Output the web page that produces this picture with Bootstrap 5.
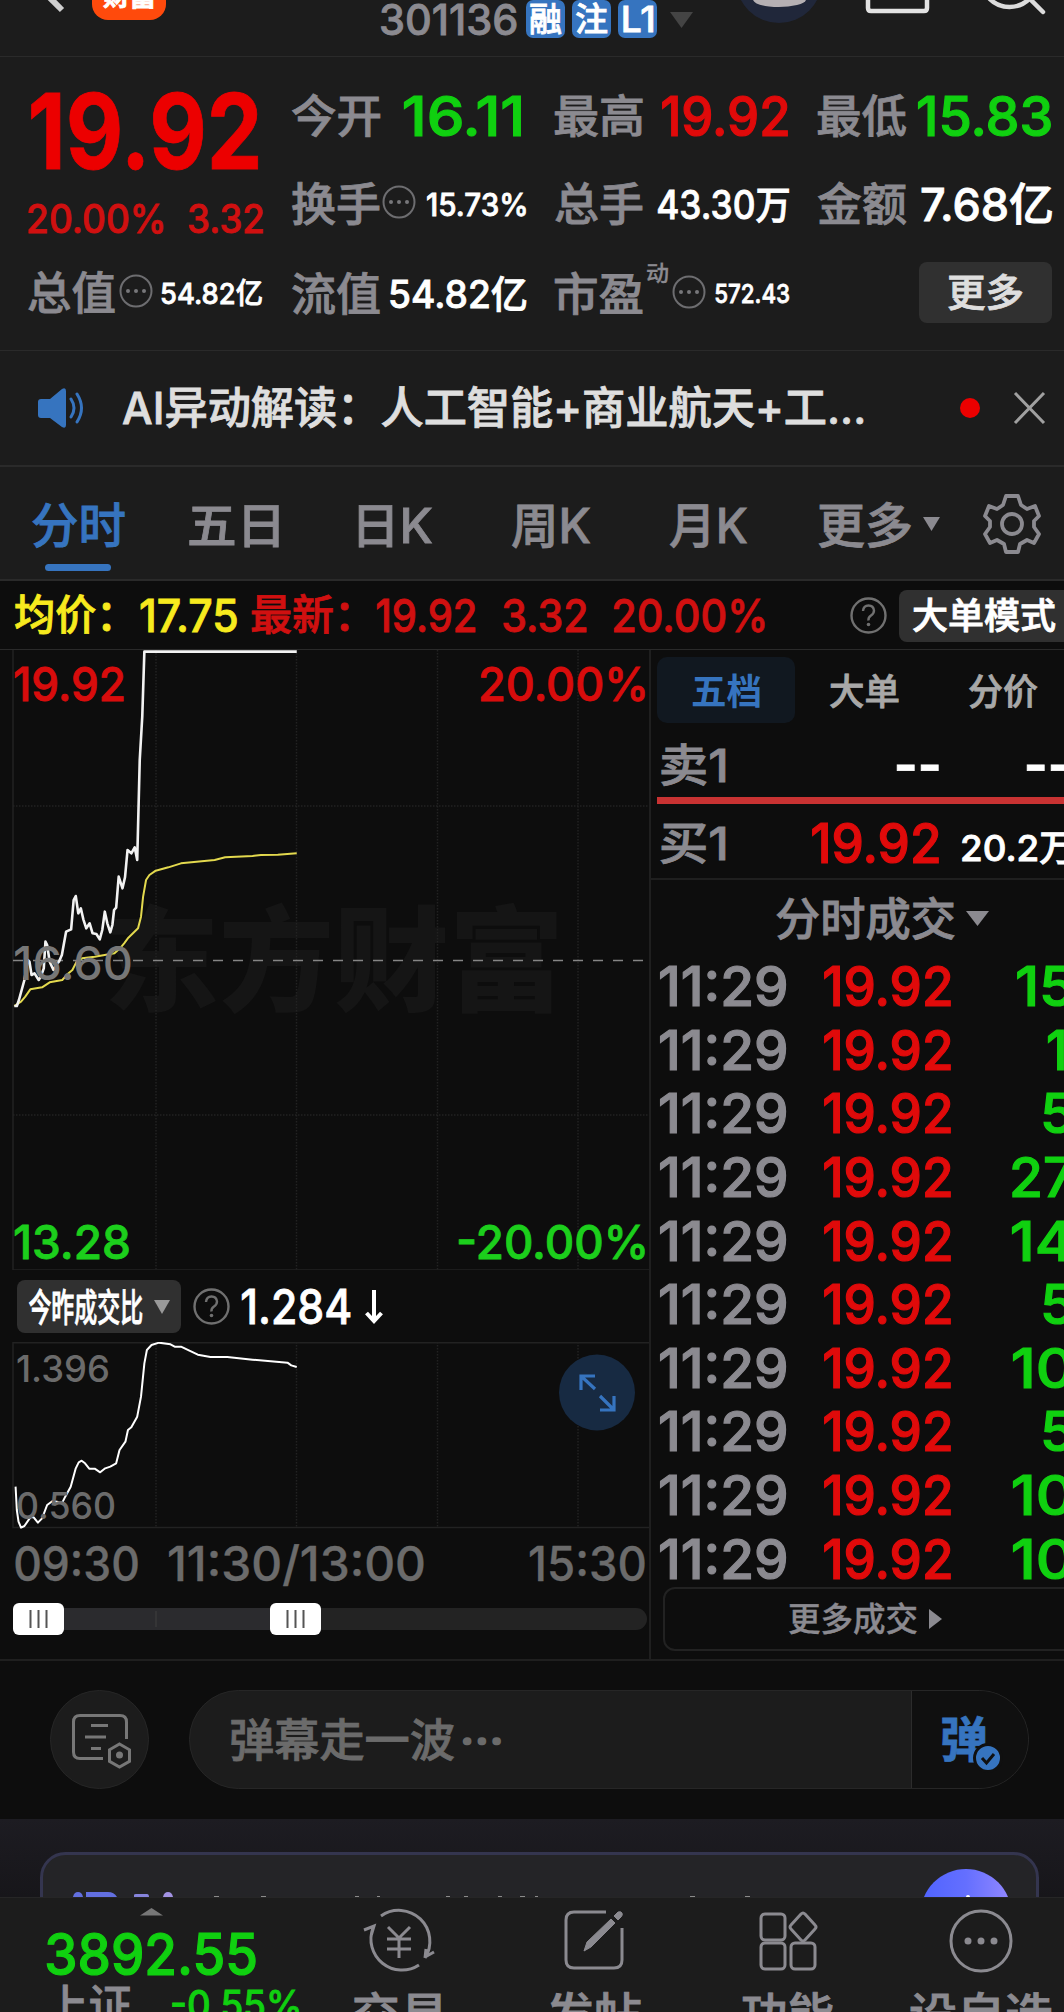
<!DOCTYPE html>
<html lang="zh-CN">
<head>
<meta charset="utf-8">
<meta name="viewport" content="width=device-width, initial-scale=1">
<title>301136 分时</title>
<link href="https://cdn.jsdelivr.net/npm/bootstrap@5.3.0/dist/css/bootstrap.min.css" rel="stylesheet">
<style>
:root{--panel:#1c1c1c;--ink:#0d0d0d;--line:#2a2a2a;--mute:#8b8a90;--dim:#6b6b6b;--up:#e00a0a;--down:#10d010;--blue:#3674bf}
html,body{margin:0;background:var(--ink)}
body{font-family:Inter,"Noto Sans CJK SC",sans-serif;font-weight:500;line-height:1;color:#fff}
svg{display:block;flex:none}
svg text{font-family:Inter,"Noto Sans CJK SC",sans-serif;font-weight:500}
.app{width:1064px;height:2012px;overflow:hidden}
.fit{display:block;flex:none;white-space:nowrap;line-height:1;-webkit-text-stroke:.8px currentColor}
.fit>span{display:inline-block;transform-origin:0 50%}
.s22{font-size:22px;-webkit-text-stroke-width:.3px}.s26{font-size:26px}.s29{font-size:29px}.s30{font-size:31px}.s32{font-size:33px}.s35{font-size:35px}.s36{font-size:36px}.s38{font-size:38px}.s39{font-size:39px}.s41{font-size:42px}.s43{font-size:44px}.s45{font-size:45px}.s47{font-size:48px}.s55{font-size:55px;-webkit-text-stroke-width:1.2px}.s57{font-size:57px;-webkit-text-stroke-width:1.2px}.s104{font-size:104px;font-weight:700}
.dim .fit{-webkit-text-stroke-width:.4px}
.mute{color:var(--mute)}.dim{color:var(--dim)}.up{color:var(--up)}.up2{color:#d01010}.down{color:var(--down)}.blue{color:var(--blue)}.pale{color:#dedede}.yel{color:#f7ea1e}
.panel{background:var(--panel);border-bottom:2px solid var(--line)}
.pillbtn{background:#303030;border-radius:8px}
/* title bar */
.titlebar{height:57px;border-bottom-width:1px}
.titlebar>.back{width:92px;height:56px}
.brand{width:74px;height:44px;margin-top:-24px;border-radius:0 0 16px 16px;background:#ff4a0c;padding-top:8px}
.code{margin-left:215px;height:40px}
.chips{margin-left:9px;gap:7px}
.chip{height:38px;width:39px;border-radius:7px;background:var(--blue)}
/* quote */
.quote{height:294px;padding:15px 0 0 28px;border-bottom-width:1px}
.qleft{width:235px;margin-right:29px}
.qcell{width:234px;height:88px;margin-right:29px}
.qcell.last{margin-right:0}
.qcell.low>.fit{margin-top:4px}
.qleft .big{height:117px;padding-left:3px}
.qleft .pct{height:58px}
.qcell.low>.dyn{margin:-38px 4px 0 4px}
.more{width:135px;height:61px;margin-left:101px}
/* notice */
.notice{height:116px;padding-left:36px}
.notice .fit{margin-left:37px}
.dot{width:20px;height:20px;border-radius:50%;background:#ec0000;margin-left:97px}
.xmark{margin-left:33px}
/* tabs */
.tabs{height:114px;padding-left:32px}
.tabitem{height:114px;border:0}
.tabitem .fit{margin-top:4px}
.tabitem.on::after{content:"";position:absolute;left:13px;top:97px;width:66px;height:7px;border-radius:4px;background:var(--blue)}
.info{height:69px;background:var(--ink);padding-left:15px;border-bottom:1px solid var(--line)}
.mode{width:180px;height:52px;margin-left:12px;padding-left:14px;margin-top:2px}
/* main */
.board{height:1011px;border-bottom:2px solid #1f1f1f}
.chartcol{width:651px;border-right:2px solid #1f1f1f}
.compare{height:72px;padding-left:17px;padding-top:1px}
.comparebtn{width:164px;height:53px;padding:0 11px 0 12px}
.axis{height:70px;padding:0 4px 0 15px}
.handles{height:34px;margin-left:13px;width:634px}
.book{width:413px;overflow:hidden}
.seg{height:66px;margin:7px 0 0 6px}
.seg .fit{margin-top:4px}
.seg .cur{width:138px;height:66px;border-radius:10px;background:#111820}
.ask{height:74px;padding:10px 0 0 10px}
.bar{height:7px;margin-left:6px;background:#c83232}
.bid{height:76px;padding:5px 0 0 10px;border-bottom:2px solid #1f1f1f}
.tickhead{height:75px;padding:3px 0 0 125px}
.ticks{height:636px}
.tick{height:63.6px;padding-left:9px}
.vol{width:121px}
.moretick{width:420px;height:64px;margin:-4px 0 0 12px;border:2px solid #222;border-radius:12px;padding-left:124px}
/* comment bar */
.danmu{height:158px;padding:29px 0 0 50px}
.roundbtn{width:99px;height:99px;border-radius:50%;background:var(--panel);border:1px solid #262626}
.field{width:840px;height:99px;margin-left:40px;border-radius:50px;background:var(--panel);border:1px solid #262626;overflow:hidden}
.field .ph{width:722px;padding:2px 0 0 41px;border-right:1px solid #2c2c2c}
.field .send{background:#101010}
.promo{height:78px;background:linear-gradient(#1d1c22,#17161a)}
.dock{height:115px;background:var(--panel);border-top:1px solid #262626}
.dockcol{height:115px}
</style>
</head>
<body>
<div class="app d-flex flex-column">

<header class="panel titlebar d-flex align-items-start flex-shrink-0">
  <svg class="back" viewBox="0 0 92 56"><path d="M38-14 62 10" stroke="#cfcfcf" stroke-width="6" fill="none"/></svg>
  <div class="brand d-flex justify-content-center"><span class="fit s26 fw-bold" data-w="52">财富</span></div>
  <div class="code d-flex align-items-center"><span class="fit s41 mute" data-w="136">301136</span></div>
  <div class="chips d-flex pt-0">
    <div class="chip d-flex align-items-center justify-content-center"><span class="fit s32" data-w="31">融</span></div>
    <div class="chip d-flex align-items-center justify-content-center"><span class="fit s32" data-w="31">注</span></div>
    <div class="chip d-flex align-items-center justify-content-center"><span class="fit s35" data-w="30">L1</span></div>
  </div>
  <svg width="406" height="56" viewBox="658 0 406 56">
    <path d="M671 12h23l-11.500 16z" fill="#444"/>
    <circle cx="780" cy="-20" r="43" fill="#20273a"/>
    <path d="M754 0q2 5 16 6.500 15 1.500 28-1.500 8-2 9-5z" fill="#b5b0b3"/>
    <path d="M869-4v12q0 3 3 3h53q3 0 3-3V-4" fill="none" stroke="#e2e2e2" stroke-width="4.500"/>
    <circle cx="1010.500" cy="-21" r="28" fill="none" stroke="#dcdcdc" stroke-width="4.500"/>
    <path d="M1030-2l14 14" stroke="#dcdcdc" stroke-width="4.500" stroke-linecap="round"/>
  </svg>
</header>

<section class="panel quote d-flex flex-shrink-0">
  <div class="qleft">
    <div class="big d-flex align-items-center"><span class="fit s104" style="color:#ec0000" data-w="227">19.92</span></div>
    <div class="pct d-flex align-items-center justify-content-between up2"><span class="fit s39" data-w="135">20.00%</span><span class="fit s39" data-w="74">3.32</span></div>
    <div class="qcell low d-flex align-items-center"><span class="fit s45 mute" data-w="87">总值</span><svg style="margin-left:4px" width="34" height="34" viewBox="-17 -17 34 34"><use href="#dots"/></svg><span class="fit s29 ms-auto" data-w="100">54.82亿</span></div>
  </div>
  <div>
    <div class="d-flex">
      <div class="qcell d-flex align-items-center justify-content-between"><span class="fit s45 mute" data-w="88">今开</span><span class="fit s55 down" style="margin-right:5px" data-w="117">16.11</span></div>
      <div class="qcell d-flex align-items-center justify-content-between"><span class="fit s45 mute" data-w="88">最高</span><span class="fit s55 up" style="margin-right:1px" data-w="126">19.92</span></div>
      <div class="qcell last d-flex align-items-center justify-content-between"><span class="fit s45 mute" data-w="88">最低</span><span class="fit s55 down" style="margin-right:1px" data-w="133">15.83</span></div>
    </div>
    <div class="d-flex">
      <div class="qcell d-flex align-items-center"><span class="fit s45 mute" data-w="88">换手</span><svg style="margin:-4px 0 0 2px" width="34" height="34" viewBox="-17 -17 34 34"><use href="#dots"/></svg><span class="fit s30 ms-auto" data-w="99">15.73%</span></div>
      <div class="qcell d-flex align-items-center justify-content-between"><span class="fit s45 mute" data-w="88">总手</span><span class="fit s39" data-w="131">43.30万</span></div>
      <div class="qcell last d-flex align-items-center justify-content-between"><span class="fit s45 mute" data-w="88">金额</span><span class="fit s45" data-w="131">7.68亿</span></div>
    </div>
    <div class="d-flex">
      <div class="qcell low d-flex align-items-center justify-content-between"><span class="fit s45 mute" data-w="88">流值</span><span class="fit s38" data-w="136">54.82亿</span></div>
      <div class="qcell low d-flex align-items-center"><span class="fit s45 mute" data-w="88">市盈</span><span class="fit s22 mute dyn" data-w="21">动</span><svg width="34" height="34" viewBox="-17 -17 34 34"><use href="#dots"/></svg><span class="fit s26 ms-auto" data-w="74">572.43</span></div>
      <div class="qcell last d-flex align-items-center"><div class="pillbtn more d-flex align-items-center justify-content-center"><span class="fit s38 pale" data-w="75">更多</span></div></div>
    </div>
  </div>
</section>

<section class="panel notice d-flex align-items-center flex-shrink-0">
  <svg width="50" height="42" viewBox="0 0 50 42"><path d="M5 12h9L26 2q4-2 4 2v34q0 4-4 2L14 31H5q-3 0-3-3V15q0-3 3-3z" fill="#3674bf"/><path d="M35 12q6 9 0 18M41 7q9 14 0 28" fill="none" stroke="#3674bf" stroke-width="3" stroke-linecap="round"/></svg>
  <span class="fit s43 pale" data-w="740">AI异动解读：人工智能+商业航天+工...</span>
  <i class="dot"></i>
  <svg class="xmark" width="33" height="34" viewBox="0 0 33 34"><path d="M2 2l29 30M31 2L2 32" stroke="#a0a0a0" stroke-width="3"/></svg>
</section>

<nav class="panel tabs d-flex flex-shrink-0 mute">
  <div class="tabitem on position-relative d-flex align-items-center blue"><span class="fit s47" data-w="93">分时</span></div>
  <div class="tabitem d-flex align-items-center" style="margin-left:64px"><span class="fit s47" data-w="90">五日</span></div>
  <div class="tabitem d-flex align-items-center" style="margin-left:80px"><span class="fit s47" data-w="73">日K</span></div>
  <div class="tabitem d-flex align-items-center" style="margin-left:80px"><span class="fit s47" data-w="78">周K</span></div>
  <div class="tabitem d-flex align-items-center" style="margin-left:80px"><span class="fit s47" data-w="77">月K</span></div>
  <div class="tabitem d-flex align-items-center" style="margin-left:72px"><span class="fit s47" data-w="92">更多</span><svg class="ms-2" width="24" height="16" viewBox="-4 0 24 16"><path d="M0 1h17L8.500 15z" fill="#8b8a90"/></svg></div>
  <div class="tabitem d-flex align-items-center" style="margin-left:39px"><svg width="60" height="62" viewBox="-30 -31 60 62" fill="none" stroke="#8b8a90" stroke-width="3.800" stroke-linejoin="round"><path d="M-6-28H6L9-19 15-15 23-18 27-8 22-3V3L27 10 22 19 15 16 8 20 6 28H-6L-8 20-15 16-22 19-27 10-22 3V-3L-27-8-23-18-15-15-9-19z"/><circle r="10"/></svg></div>
</nav>

<section class="info d-flex align-items-center flex-shrink-0">
  <span class="fit s41 yel" data-w="96">均价：</span>
  <span class="fit s45 yel" style="margin-left:30px" data-w="96">17.75</span>
  <span class="fit s41 up2" style="margin-left:14px" data-w="98">最新：</span>
  <span class="fit s45 up2" style="margin-left:28px" data-w="98">19.92</span>
  <span class="fit s45 up2" style="margin-left:28px" data-w="83">3.32</span>
  <span class="fit s45 up2" style="margin-left:28px" data-w="150">20.00%</span>
  <svg style="margin-left:86px" width="37" height="37" viewBox="-18.500 -18.500 37 37"><use href="#help"/></svg>
  <div class="pillbtn mode d-flex align-items-center flex-shrink-0"><span class="fit s36" data-w="142">大单模式</span></div>
</section>

<main class="board d-flex flex-shrink-0">
  <div class="chartcol flex-shrink-0">
    <svg width="649" height="620" viewBox="0 0 649 620">
      <text x="104" y="352" font-size="114" style="font-weight:900" textLength="460" lengthAdjust="spacingAndGlyphs" fill="#151515">东方财富</text>
      <g stroke="#222" stroke-width="1.500" fill="none">
        <path d="M13 0V620H649"/>
        <path d="M156 0V620M296.500 0V620M437.500 0V620M578 0V620M13 156H649M13 465H649" stroke-dasharray="1.500 1.500"/>
      </g>
      <path d="M13 310.500H645" stroke="#858585" stroke-width="1.600" stroke-dasharray="10 10"/>
      <g transform="translate(0,-10) scale(.4209,.33333)" fill="none" stroke-linejoin="round">
        <polyline vector-effect="non-scaling-stroke" stroke="#e3d94e" stroke-width="2" points="34,1098 50,1085 60,1070 72,1048 100,1042 118,1027 148,1020 160,1003 172,990 182,965 195,955 225,950 272,940 285,925 295,910 305,893 328,865 335,830 340,770 347,720 355,705 370,692 400,682 430,670 510,660 535,652 600,648 620,645 660,644 705,640"/>
        <polyline vector-effect="non-scaling-stroke" stroke="#f2f2f2" stroke-width="2.600" points="34,1098 40,1098 45,1080 58,1020 66,960 70,965 75,1005 82,1000 92,1020 97,1010 104,985 108,905 112,915 118,965 127,990 133,975 140,965 147,945 157,875 169,868 175,780 180,768 186,820 192,805 198,838 205,865 213,850 220,880 229,882 237,898 243,870 249,815 255,850 262,877 267,855 271,810 276,803 282,710 291,745 297,712 303,630 312,640 320,622 326,660 332,360 338,230 343,35 705,35"/>
      </g>
      <g font-size="47" stroke-width=".8">
        <text x="13" y="51" textLength="113" lengthAdjust="spacingAndGlyphs" fill="#d80c0c" stroke="#d80c0c">19.92</text>
        <text x="478" y="51" textLength="171" lengthAdjust="spacingAndGlyphs" fill="#d80c0c" stroke="#d80c0c">20.00%</text>
        <text x="13" y="330" textLength="120" lengthAdjust="spacingAndGlyphs" fill="#777">16.60</text>
        <text x="13" y="609" textLength="118" lengthAdjust="spacingAndGlyphs" fill="#1ccf1c" stroke="#1ccf1c">13.28</text>
        <text x="456" y="609" textLength="193" lengthAdjust="spacingAndGlyphs" fill="#1ccf1c" stroke="#1ccf1c">-20.00%</text>
      </g>
    </svg>
    <div class="compare d-flex align-items-center">
      <div class="pillbtn comparebtn d-flex align-items-center justify-content-between"><span class="fit s38" data-w="113">今昨成交比</span><svg width="16" height="14"><path d="M0 0h16L8 14z" fill="#999"/></svg></div>
      <svg style="margin-left:12px" width="37" height="37" viewBox="-18.500 -18.500 37 37"><use href="#help"/></svg>
      <span class="fit s47" style="margin-left:12px" data-w="108">1.284</span>
      <svg style="margin-left:15px" width="18" height="34" viewBox="0 0 18 34"><path d="M9 0v31M1.500 23L9 31l7.500-8" fill="none" stroke="#fff" stroke-width="4"/></svg>
    </div>
    <svg width="649" height="187" viewBox="0 1342 649 187">
      <g stroke="#222" stroke-width="1.500" fill="none">
        <path d="M649 1342.800H13V1527.500H649"/>
        <path d="M156 1342V1527M296.500 1342V1527M437.500 1342V1527M578 1342V1527" stroke-dasharray="1.500 1.500"/>
      </g>
      <polyline transform="translate(0,1230) scale(.4209,.33333)" vector-effect="non-scaling-stroke" fill="none" stroke="#fff" stroke-width="2" stroke-linejoin="round" points="37,770 40,840 44,875 50,893 58,888 72,862 80,862 90,878 100,865 112,825 125,813 148,818 155,800 168,770 180,715 187,697 194,692 202,700 212,716 225,716 238,727 250,715 262,710 276,700 284,660 298,635 304,600 312,592 326,560 335,500 343,400 349,360 360,345 378,338 405,343 415,350 430,350 450,362 470,374 500,381 540,381 600,389 683,398 692,406 705,411"/>
      <g font-size="37" fill="#6b6b6b">
        <text x="16" y="1382" textLength="94" lengthAdjust="spacingAndGlyphs">1.396</text>
        <text x="16" y="1518.500" textLength="100" lengthAdjust="spacingAndGlyphs">0.560</text>
      </g>
      <circle cx="597" cy="1392.500" r="38" fill="#172a42"/>
      <path d="M595 1376H581V1390M581 1376L595 1389M600 1410H614V1396M614 1410L600 1396" fill="none" stroke="#3674bf" stroke-width="3.200"/>
    </svg>
    <div class="axis d-flex align-items-center dim">
      <span class="fit s47" data-w="123">09:30</span>
      <span class="fit s47" style="margin-left:31px" data-w="255">11:30/13:00</span>
      <span class="fit s47 ms-auto" data-w="115">15:30</span>
    </div>
    <svg class="handles" style="margin-top:3px" viewBox="0 0 634 34">
      <rect x="10" y="6" width="624" height="22" rx="11" fill="#232323"/><rect x="10" y="6" width="270" height="22" fill="#2b2b2e"/><path d="M143 9v16" stroke="#3a3a3a" stroke-width="1.500"/>
      <rect x="0" y="1" width="51" height="32" rx="6" fill="#fff"/><rect x="257" y="1" width="51" height="32" rx="6" fill="#fff"/>
      <path d="M17.500 8v18M25.500 8v18M33.500 8v18M274.500 8v18M282.500 8v18M290.500 8v18" stroke="#555" stroke-width="2"/>
    </svg>
  </div>

  <div class="book">
    <div class="seg d-flex align-items-center">
      <div class="cur d-flex align-items-center justify-content-center blue"><span class="fit s36 fw-bold" style="-webkit-text-stroke-width:0" data-w="69">五档</span></div>
      <span class="fit s36" style="margin-left:35px;color:#a8a8a8" data-w="69">大单</span>
      <span class="fit s36" style="margin-left:70px;color:#a8a8a8" data-w="69">分价</span>
    </div>
    <div class="ask d-flex align-items-center"><span class="fit s45 mute" data-w="65">卖1</span><span class="fit s47 fw-bold" style="margin-left:171px" data-w="42">--</span><span class="fit s47 fw-bold" style="margin-left:88px" data-w="42">--</span></div>
    <div class="bar"></div>
    <div class="bid d-flex align-items-center"><span class="fit s45 mute" data-w="65">买1</span><span class="fit s55 up" style="margin-left:86px" data-w="127">19.92</span><span class="fit s36 mt-2" style="margin-left:23px" data-w="112">20.2万</span></div>
    <div class="tickhead d-flex align-items-center mute"><span class="fit s45" data-w="179">分时成交</span><svg style="margin:-2px 0 0 11px" width="23" height="15"><path d="M0 0h23L11.500 15z" fill="#8b8a90"/></svg></div>
    <div class="ticks" id="ticks"></div>
    <div class="moretick d-flex align-items-center mute"><span class="fit s32" style="-webkit-text-stroke-width:.4px" data-w="128">更多成交</span><svg style="margin-left:12px" width="13" height="20"><path d="M0 0l13 10L0 20z" fill="#8b8a90"/></svg></div>
  </div>
</main>

<section class="danmu d-flex flex-shrink-0">
  <div class="roundbtn d-flex align-items-center justify-content-center flex-shrink-0">
    <svg width="64" height="60" viewBox="68 1711 64 60" fill="none" stroke="#777" stroke-width="3"><path d="M126.500 1740v-17q0-6.500-6.500-6.500H80q-6.500 0-6.500 6.500v30q0 6.500 6.500 6.500h23M91 1726.500h17M85 1738h21M91 1749.500h10"/><path d="M119.500 1745l10 5.800v11.500l-10 5.700-10-5.700v-11.500z"/><circle cx="119.500" cy="1756" r="3.500" fill="#777" stroke="none"/></svg>
  </div>
  <div class="field d-flex">
    <div class="ph d-flex align-items-center dim flex-shrink-0"><span class="fit s45" style="-webkit-text-stroke-width:.8px" data-w="223">弹幕走一波</span><span class="fit s45" style="margin-left:9px;-webkit-text-stroke-width:1.5px" data-w="38">···</span></div>
    <div class="send flex-grow-1 position-relative d-flex align-items-center">
      <span class="fit s47 fw-bold blue" style="margin-left:30px" data-w="45">弹</span>
      <svg class="position-absolute" style="left:60px;top:51px" width="32" height="32" viewBox="-16 -16 32 32"><circle r="13.500" fill="#3674bf" stroke="#101010" stroke-width="3"/><path d="M-6 0l4.500 5L6-4" fill="none" stroke="#101010" stroke-width="3"/></svg>
    </div>
  </div>
</section>

<section class="promo flex-shrink-0">
  <svg width="1064" height="78" viewBox="0 1819 1064 78">
    <defs><linearGradient id="orb"><stop offset="0" stop-color="#4f63ff"/><stop offset=".5" stop-color="#646fff"/><stop offset="1" stop-color="#9388ff"/></linearGradient></defs>
    <rect x="41.500" y="1853.500" width="996" height="90" rx="24" fill="#242427" stroke="#34354f" stroke-width="3"/>
    <circle cx="966" cy="1914.500" r="45.500" fill="url(#orb)"/><circle cx="968" cy="1897" r="2" fill="#fff"/>
    <path d="M73 1897q1-5 5-5t5 5zM86 1897v-5h22q6 0 9 5z" fill="#626fe0"/><path d="M134 1897v-2q0-1 2-1h11q2 0 2 3z" fill="#8684dc"/><path d="M163 1897q1-5 5-5t5 5z" fill="#a393e4"/>
    <path d="M214 1896.500h5M261 1896.500h5M355 1896.500h4M377 1896.500h3M446 1896.500h4M464 1896.500h4M498 1896.500h4M520 1896.500h5M535 1896.500h3M690 1896.500h5M745 1896.500h5" stroke="#8a8a8a" stroke-width="1"/>
  </svg>
</section>

<footer class="dock d-flex flex-shrink-0">
  <div class="dockcol flex-shrink-0" style="width:354px;padding:10px 0 0 47px">
    <svg width="200" height="8"><path d="M93 7.500L104.500 0 116 7.500z" fill="#777"/></svg>
    <div class="d-flex align-items-center" style="height:76px"><span class="fit s57 down" data-w="209">3892.55</span></div>
    <div class="d-flex align-items-center" style="height:44px;margin-top:-10px"><span class="fit s45 mute" style="margin-top:4px" data-w="84">上证</span><span class="fit s39 down" style="margin-left:41px" data-w="127">-0.55%</span></div>
  </div>
  <div class="dockcol flex-shrink-0 d-flex flex-column align-items-center mute" style="width:90px;padding-top:10px">
    <svg width="74" height="66" viewBox="-37 -33 74 66" fill="none" stroke="#8b8a90" stroke-width="3"><path d="M-18-25A31 31 0 0 1 26 17M26 17l1-9M26 16l9-5M20 24A31 31 0 0 1-26-13M-35-11l10-4-3 10M-11-14L0-3 11-14M0-3V17M-12-2H12M-12 8H12"/></svg>
    <span class="fit s45" style="margin-top:18px" data-w="90">交易</span>
  </div>
  <div class="dockcol flex-shrink-0 d-flex flex-column align-items-center mute" style="width:94px;margin-left:103px;padding-top:10px">
    <svg width="64" height="66" viewBox="-32 -33 64 66" fill="none" stroke="#8b8a90" stroke-width="3"><path d="M12-29H-20q-8 0-8 8V19q0 8 8 8H20q8 0 8-8V-13"/><path d="M-10 10l3-9L17-22l4 4L-3 6zM20-25l4-4q3-1 4 1t-1 4l-3 3z" fill="#8b8a90" stroke-width="1"/></svg>
    <span class="fit s45" style="margin-top:18px" data-w="94">发帖</span>
  </div>
  <div class="dockcol flex-shrink-0 d-flex flex-column align-items-center mute" style="width:91px;margin-left:101px;padding-top:10px">
    <svg width="62" height="66" viewBox="-31 -32 62 66" fill="none" stroke="#8b8a90" stroke-width="3"><rect x="-27" y="-26" width="24" height="26" rx="4"/><rect x="-27" y="4" width="24" height="26" rx="4" transform="translate(0,-1)"/><rect x="3" y="3" width="24" height="26" rx="4"/><path d="M13-26q2-2 4 0l10 11q2 2 0 4L17 0q-2 2-4 0L3-11q-2-2 0-4z"/></svg>
    <span class="fit s45" style="margin-top:18px" data-w="91">功能</span>
  </div>
  <div class="dockcol flex-shrink-0 d-flex flex-column align-items-center mute" style="width:142px;margin-left:77px;padding-top:10px">
    <svg width="66" height="66" viewBox="-33 -33 66 66"><circle r="30" fill="none" stroke="#8b8a90" stroke-width="3"/><circle cx="-13" r="3.500" fill="#8b8a90"/><circle r="3.500" fill="#8b8a90"/><circle cx="13" r="3.500" fill="#8b8a90"/></svg>
    <span class="fit s45" style="margin-top:18px" data-w="142">设自选</span>
  </div>
</footer>
</div>

<svg width="0" height="0" class="position-absolute"><defs>
  <g id="dots"><circle r="15.500" fill="none" stroke="#6d6d70" stroke-width="2"/><circle cx="-8" r="2" fill="#77777a"/><circle r="2" fill="#77777a"/><circle cx="8" r="2" fill="#77777a"/></g>
  <g id="help"><circle r="17" fill="none" stroke="#707070" stroke-width="2.400"/><path d="M-5.500-4.500q.5-5.500 5.500-5.500t5.500 5q0 3-3 5T0 5" fill="none" stroke="#707070" stroke-width="2.400"/><circle cy="9" r="1.800" fill="#707070"/></g>
</defs></svg>

<script src="https://cdn.jsdelivr.net/npm/bootstrap@5.3.0/dist/js/bootstrap.bundle.min.js"></script>
<script>
// trade ticks: volume and its drawn width
const vols = [['15',55],['1',16],['5',29],['27',60],['14',60],['5',29],['10',59],['5',29],['10',59],['10',59]];
document.getElementById('ticks').innerHTML = vols.map(([v, w]) =>
  `<div class="tick d-flex align-items-center"><span class="fit s55 mute" data-w="126">11:29</span>
   <span class="fit s55 up" style="margin-left:38px" data-w="127">19.92</span>
   <div class="vol d-flex justify-content-end flex-shrink-0"><span class="fit s55 down" style="margin-right:${v === '1' ? 8 : 0}px" data-w="${w}">${v}</span></div></div>`).join('');

// condense each label so its glyphs span exactly data-w pixels
const ctx = document.createElement('canvas').getContext('2d');
document.querySelectorAll('.fit').forEach(el => {
  const cs = getComputedStyle(el), w = +el.dataset.w, t = el.textContent;
  ctx.font = `${cs.fontWeight} ${cs.fontSize} ${cs.fontFamily}`;
  const m = ctx.measureText(t);
  const s = w / (m.actualBoundingBoxLeft + m.actualBoundingBoxRight);
  const inner = document.createElement('span');
  inner.textContent = t;
  inner.style.transform = `scaleX(${s}) translateX(${m.actualBoundingBoxLeft}px)`;
  el.replaceChildren(inner);
  el.style.width = w + 'px';
});
</script>
</body>
</html>
